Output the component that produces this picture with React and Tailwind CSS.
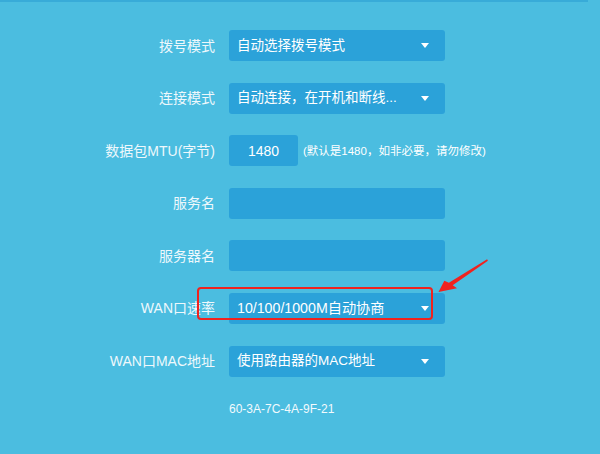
import React from "react";

const font = { fontFamily: '"Liberation Sans", "Noto Sans CJK SC", sans-serif' };

function Caret() {
  return (
    <svg width="8" height="5" viewBox="0 0 8 5" className="shrink-0">
      <path d="M0 0 L8 0 L4 5 Z" fill="#ffffff" />
    </svg>
  );
}

function Row({ label, children }) {
  return (
    <div className="flex items-center h-[31px]">
      <div className="w-[215px] text-right text-[14px] leading-[16px] text-[#eef8fc] whitespace-nowrap">
        {label}
      </div>
      <div className="ml-[14px] flex items-center h-full">{children}</div>
    </div>
  );
}

function Select({ text, size = "text-[13.5px]" }) {
  return (
    <div className="w-[216px] h-[31px] rounded-[3px] bg-[#2ba2d9] flex items-center justify-between pl-[8px] pr-[16px]">
      <span className={`${size} leading-[16px] text-white whitespace-nowrap`}>{text}</span>
      <Caret />
    </div>
  );
}

function Input() {
  return <div className="w-[216px] h-[31px] rounded-[3px] bg-[#2ba2d9]" />;
}

export default function App() {
  return (
    <div className="relative w-[600px] h-[454px] bg-[#4bbde0] overflow-hidden" style={font}>
      <div className="w-[588px] h-[2px] bg-[#38abd8]" />
      <div className="pt-[28px] flex flex-col gap-[21.6px]">
        <Row label="拨号模式">
          <Select text="自动选择拨号模式" />
        </Row>
        <Row label="连接模式">
          <Select text="自动连接，在开机和断线..." />
        </Row>
        <Row label="数据包MTU(字节)">
          <div className="w-[69px] h-[31px] rounded-[3px] bg-[#2ba2d9] flex items-center justify-center text-[14px] leading-[16px] text-white">
            1480
          </div>
          <span className="ml-[5px] text-[11.5px] leading-[14px] text-white whitespace-nowrap">
            (默认是1480，如非必要，请勿修改)
          </span>
        </Row>
        <Row label="服务名">
          <Input />
        </Row>
        <Row label="服务器名">
          <Input />
        </Row>
        <div className="relative">
          <Row label="WAN口速率">
            <Select text="10/100/1000M自动协商" size="text-[14.2px]" />
          </Row>
          <div className="absolute left-[197px] top-[-6px] w-[236px] h-[33px] border-[2.5px] border-[#f0231f] rounded-[4px]" />
        </div>
        <Row label="WAN口MAC地址">
          <Select text="使用路由器的MAC地址" />
        </Row>
      </div>
      <div className="mt-[24px] ml-[229px] text-[12px] leading-[16px] text-[#f2fafd]">60-3A-7C-4A-9F-21</div>
      <svg className="absolute left-0 top-0" width="600" height="454" viewBox="0 0 600 454">
        <polygon
          points="438.5,292 444.3,280.8 448.9,282.7 487.1,259.3 487.9,260.7 452.7,285.2 457,288.3"
          fill="#f0231f"
        />
      </svg>
    </div>
  );
}
